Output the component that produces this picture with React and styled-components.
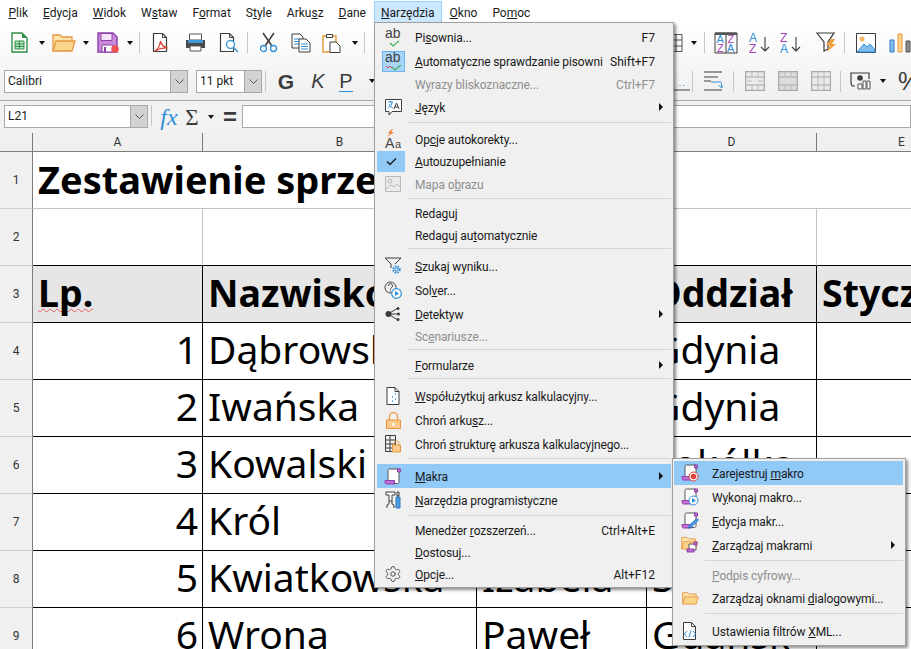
import React from 'react'
import styled, { createGlobalStyle } from 'styled-components'
import { Settings } from 'lucide-react'

const uiFont = `Roboto, "Noto Sans", sans-serif`
const sheetFont = `"Noto Sans", "Open Sans", sans-serif`

const Global = createGlobalStyle`
  html, body { margin: 0; padding: 0; background: #fff; }
  body { font-family: ${uiFont}; font-size: 12px; color: #1a1a1a; }
`

const Page = styled.div`
  width: 911px;
  height: 649px;
  position: relative;
  overflow: hidden;
  background: #fff;
`
const Chrome = styled.div`
  height: 100px;
  background: linear-gradient(#ffffff 24px, #efefef 100%);
  border-bottom: 1px solid #a9a9a9;
`
const MenuBar = styled.div`
  height: 24px;
  display: flex;
  padding-left: 1px;
`
const MenuTitle = styled.div`
  height: 21px;
  margin-top: 1px;
  padding: 0 6.5px;
  display: flex;
  align-items: center;
  border: 1px solid ${p => (p.$open ? '#99d1ff' : 'transparent')};
  background: ${p => (p.$open ? '#cce8ff' : 'transparent')};
`
const Toolbar = styled.div`
  display: flex;
  align-items: center;
  box-sizing: border-box;
  height: 38px;
  padding-left: ${p => p.$pad || 0}px;
  padding-bottom: ${p => p.$pb || 0}px;
`
const Tool = styled.div`
  flex: none;
  width: ${p => p.$w}px;
  height: 24px;
  display: flex;
  align-items: center;
  justify-content: center;
`
const Sep = styled.div`
  flex: none;
  width: 1px;
  height: 21px;
  background: #c6c6c6;
`
const Drop = styled.div`
  width: 0;
  height: 0;
  border-left: 3.5px solid transparent;
  border-right: 3.5px solid transparent;
  border-top: 4px solid #111;
`
const Combo = styled.div`
  flex: none;
  width: ${p => p.$w}px;
  height: 23px;
  display: flex;
  box-sizing: border-box;
  border: 1px solid #a8a8a8;
  background: #fff;
  margin-right: ${p => p.$mr || 0}px;
`
const ComboText = styled.div`
  flex: 1;
  padding-left: 3px;
  line-height: 21px;
  font-size: 12px;
  color: #222;
`
const ComboBtn = styled.div`
  width: 16px;
  background: #d2d2d2;
  border-left: 1px solid #a8a8a8;
  display: flex;
  align-items: center;
  justify-content: center;
`
const Glyph = styled.span`
  font-family: "Liberation Sans", sans-serif;
  font-size: ${p => p.$size || 18}px;
  font-weight: ${p => (p.$bold ? 700 : 400)};
  font-style: ${p => (p.$italic ? 'italic' : 'normal')};
  color: ${p => p.$color || '#3c3c3c'};
  border-bottom: ${p => (p.$under ? '1px solid #2f8fd8' : 'none')};
  line-height: 1;
`
const FxGlyph = styled(Glyph)`
  font-family: "Liberation Serif", serif;
`
const FormulaBar = styled.div`
  height: 32px;
  box-sizing: border-box;
  background: #f2f2f2;
  display: flex;
  align-items: flex-start;
  padding: 4px 0 0 4px;
`
const FormulaInput = styled.div`
  flex: 1;
  height: 23px;
  box-sizing: border-box;
  border: 1px solid #a8a8a8;
  background: #fff;
`
const Sheet = styled.div`
  display: grid;
  grid-template-columns: 33px 170px 274px 170px 170px 170px;
  grid-template-rows: 19px repeat(9, 57px);
`
const ColHead = styled.div`
  background: #f0f0f0;
  border-bottom: 1px solid #7d7d7d;
  border-right: 1px solid #7d7d7d;
  text-align: center;
  line-height: 18px;
  font-size: 12px;
  color: #333;
`
const RowHead = styled.div`
  background: #f0f0f0;
  border-right: 1px solid #7d7d7d;
  border-bottom: 1px solid #d0d0d0;
  display: flex;
  align-items: center;
  justify-content: center;
  font-size: 12px;
  color: #333;
`
const Cell = styled.div`
  box-sizing: border-box;
  overflow: hidden;
  white-space: nowrap;
  padding: 0 4px 4px 5px;
  display: flex;
  align-items: center;
  justify-content: ${p => (p.$right ? 'flex-end' : 'flex-start')};
  font-family: ${sheetFont};
  font-size: 39px;
  line-height: 52px;
  color: #000;
  background: #fff;
  border-right: 1px solid ${p => (p.$soft ? '#c4c4c4' : '#000')};
  border-bottom: 1px solid #000;
`
const TitleCell = styled(Cell)`
  grid-column: span 5;
  padding-bottom: 2px;
  font-size: 38px;
  font-weight: 700;
  border-right: 0;
  border-bottom: 1px solid #c4c4c4;
`
const HeadCell = styled(Cell)`
  padding-bottom: 2px;
  font-size: 37.5px;
  font-weight: 700;
  background: #e6e6e6;
`
const Misspelt = styled.span`
  text-decoration: underline wavy #ee5b5b 1px;
  text-decoration-skip-ink: none;
  text-underline-offset: 1px;
`
const Popup = styled.div`
  position: absolute;
  left: ${p => p.$x}px;
  top: ${p => p.$y}px;
  width: ${p => p.$w}px;
  box-sizing: border-box;
  padding: 2px 2px 2px ${p => p.$pl}px;
  background: #f0f0f0;
  border: 1px solid #a0a0a0;
  box-shadow: 2px 2px 3px rgba(0, 0, 0, 0.45);
`
const Row = styled.div`
  height: ${p => p.$h}px;
  display: flex;
  align-items: center;
  color: ${p => (p.$off ? '#8f8f8f' : '#1a1a1a')};
  background: ${p => (p.$hot ? '#91c9f7' : 'transparent')};
`
const IconCell = styled.div`
  flex: none;
  width: 28px;
  margin-right: 10px;
  height: 100%;
  display: flex;
  align-items: center;
  justify-content: center;
  box-sizing: border-box;
  padding-left: ${p => (p.$on ? 0 : 4)}px;
  background: ${p => (p.$on ? '#91c9f7' : 'transparent')};
`
const AutoBox = styled.div`
  flex: none;
  width: 23px;
  height: 21px;
  box-sizing: border-box;
  display: flex;
  align-items: center;
  justify-content: center;
  background: #a9d5f9;
  border: 1px solid #6cb4ef;
`
const Label = styled.div`
  flex: 1;
  white-space: nowrap;
  padding-top: 1px;
  letter-spacing: -0.12px;
`
const Key = styled.u`
  text-underline-offset: 1px;
`
const Shortcut = styled.div`
  margin-right: 16px;
  padding-top: 1px;
  white-space: nowrap;
`
const Arrow = styled.div`
  width: 0;
  height: 0;
  margin-right: 8px;
  border-top: 4px solid transparent;
  border-bottom: 4px solid transparent;
  border-left: 4px solid #111;
`
const Divider = styled.div`
  height: ${p => p.$h}px;
  margin-left: 31px;
  box-sizing: border-box;
  padding-top: ${p => p.$top || 3}px;
  &::before {
    content: '';
    display: block;
    height: 1px;
    background: #d4d4d4;
  }
`

// "~" marks the mnemonic letter, same as the labels in LibreOffice itself
const Mnemonic = ({ text }) => {
  const i = text.indexOf('~')
  if (i < 0) return text
  return (
    <>
      {text.slice(0, i)}
      <Key>{text[i + 1]}</Key>
      {text.slice(i + 2)}
    </>
  )
}

const Svg = ({ w, h, children, o }) => (
  <svg width={w} height={h} viewBox={`0 0 ${w} ${h}`} fill="none" style={o ? { opacity: o } : undefined}>
    {children}
  </svg>
)
const svgText = { fontFamily: '"Liberation Sans", sans-serif' }

const NewSheetIcon = () => (
  <Svg w={17} h={21}>
    <path d="M1 1h10l5 5v14H1z" fill="#fff" stroke="#2f8f46" strokeWidth="1.4" />
    <path d="M11 1v5h5z" fill="#2f8f46" />
    <path d="M4 9h9v8H4z" fill="#bfe3c6" stroke="#2f8f46" />
    <path d="M4 12h9M4 14.500h9M8.500 9v8" stroke="#2f8f46" />
  </Svg>
)
const FolderPaths = () => (
  <>
    <path d="M1 18V2h7l2 2h10v4" fill="#fde3ad" stroke="#e8973f" strokeWidth="1.3" />
    <path d="M1 18l3-10h19l-3 10z" fill="#fbd58a" stroke="#e8973f" strokeWidth="1.3" />
  </>
)
const FolderIcon = ({ w = 24, h = 19 }) => (
  <svg width={w} height={h} viewBox="0 0 24 19" fill="none">
    <FolderPaths />
  </svg>
)
const SaveIcon = () => (
  <Svg w={23} h={22}>
    <path d="M1 1h15l4 4v15H1z" fill="#c98ad8" stroke="#8d3fa8" strokeWidth="1.4" />
    <path d="M4 1.500h11v7H4z" fill="#f3e4f7" stroke="#8d3fa8" />
    <path d="M5 13h11v7H5z" fill="#fff" stroke="#8d3fa8" />
    <path d="M7 15h2v5H7z" fill="#8d3fa8" />
    <circle cx="18" cy="17" r="3.800" fill="#ee5253" />
  </Svg>
)
const DocOutline = () => <path d="M1.500 1.500h9l4 4v14h-13z" fill="#fff" stroke="#3c3c3c" strokeWidth="1.2" />
const PdfIcon = () => (
  <Svg w={17} h={21}>
    <DocOutline />
    <path d="M10.500 1.500v4h4" stroke="#3c3c3c" />
    <path d="M3 19c3-2 5-6 5.500-10 .8 4 3 6 7 7-4-.5-7 0-12.500 3z" stroke="#e2453c" strokeWidth="1.3" />
  </Svg>
)
const PrintIcon = () => (
  <Svg w={21} h={19}>
    <path d="M4.500 1h12v6h-12z" fill="#fff" stroke="#555" />
    <path d="M1 7h19v8H1z" fill="#4a4a4a" />
    <path d="M3 7h15v3H3z" fill="#3f9ad8" />
    <path d="M5 13h11v5H5z" fill="#fff" stroke="#555" />
  </Svg>
)
const PreviewIcon = () => (
  <Svg w={20} h={21}>
    <DocOutline />
    <path d="M10.500 1.500v4h4" stroke="#3c3c3c" />
    <circle cx="11.500" cy="12.500" r="4" fill="#fff" stroke="#3f9ad8" strokeWidth="1.4" />
    <path d="M14.500 15.500l4.500 4.500" stroke="#3f9ad8" strokeWidth="1.6" />
  </Svg>
)
const CutIcon = () => (
  <Svg w={19} h={21}>
    <path d="M4 1l9 13M15 1L6 14" stroke="#3c3c3c" strokeWidth="1.5" />
    <circle cx="4.500" cy="16.500" r="3" stroke="#2f8fd8" strokeWidth="1.3" />
    <circle cx="14.500" cy="16.500" r="3" stroke="#2f8fd8" strokeWidth="1.3" />
  </Svg>
)
const CopyIcon = () => (
  <Svg w={20} h={20}>
    <path d="M1 1h8l3 3v11H1z" fill="#fff" stroke="#3c3c3c" />
    <path d="M3 6h6M3 8.500h6M3 11h6" stroke="#2f8fd8" />
    <path d="M8 6h7l4 4v9H8z" fill="#fff" stroke="#3c3c3c" />
    <path d="M10 11h7M10 13.500h7M10 16h7" stroke="#2f8fd8" />
  </Svg>
)
const PasteIcon = () => (
  <Svg w={19} h={21}>
    <path d="M1 4h13v16H1z" fill="#fff" stroke="#e8973f" strokeWidth="1.4" />
    <path d="M4.500 2.500h6v3h-6z" fill="#fff" stroke="#3c3c3c" />
    <path d="M8 10h6l4 4v6.500H8z" fill="#fff" stroke="#3c3c3c" />
  </Svg>
)
const TableIcon = () => (
  <Svg w={20} h={20}>
    <path d="M1 1.500h18v17H1zM1 7h18M1 13h18M7 1.500v17M13 1.500v17" stroke="#555" />
  </Svg>
)
const Letter = ({ x, y, c, s = 11, children }) => (
  <text x={x} y={y} fill={c} fontSize={s} style={svgText}>
    {children}
  </text>
)
const blue = '#2f8fd8'
const purple = '#a63fb5'
const AzIcon = () => (
  <Svg w={24} h={22}>
    <path d="M1 1h22v20H1zM12 3v18" stroke="#3c3c3c" />
    <path d="M1 .5h22v2.500H1z" fill="#555" />
    <Letter x={2.500} y={11} c={blue}>A</Letter>
    <Letter x={3} y={20} c={purple}>Z</Letter>
    <Letter x={13.500} y={11} c={purple}>Z</Letter>
    <Letter x={13} y={20} c={blue}>A</Letter>
  </Svg>
)
const SortIcon = ({ top, bottom, topC, bottomC }) => (
  <Svg w={22} h={22}>
    <Letter x={0} y={10} c={topC} s={12}>{top}</Letter>
    <Letter x={0} y={21} c={bottomC} s={12}>{bottom}</Letter>
    <path d="M16 5v14M12 15l4 4 4-4" stroke="#3c3c3c" strokeWidth="1.1" />
  </Svg>
)
const FilterIcon = () => (
  <Svg w={21} h={21}>
    <path d="M1 1h17l-6 9v7l-4 2v-9z" fill="#fff" stroke="#3c3c3c" strokeWidth="1.2" />
    <path d="M15 7l-5 6h4l-3 7 9-8h-4l3-5z" fill="#f0a03c" />
  </Svg>
)
const ImageIcon = () => (
  <Svg w={20} h={20}>
    <path d="M.5 .5h19v19H.5z" fill="#fff" stroke="#3c3c3c" strokeWidth="1" />
    <circle cx="6" cy="6" r="2.500" fill="#f5b461" />
    <path d="M1 19l7-8 3 3 3-3 5 6v2z" fill="#82bdf0" stroke="#2f8fd8" />
  </Svg>
)
const ChartIcon = () => (
  <Svg w={23} h={20}>
    <path d="M1 7h4v12H1z" fill="#82bdf0" stroke="#2f78c0" />
    <path d="M9 1h4v18H9z" fill="#fbd58a" stroke="#e8973f" />
    <path d="M17 8h4v11h-4z" fill="#8a8a8a" stroke="#555" />
  </Svg>
)
const AlignIcon = () => (
  <Svg w={20} h={20}>
    <path d="M0 19h20" stroke="#3c3c3c" />
    <path d="M10 14v2M14 14v2" stroke="#2f8fd8" strokeDasharray="1 1" />
  </Svg>
)
const WrapIcon = () => (
  <Svg w={20} h={20}>
    <path d="M1 1h18M1 6h14M1 10h7M1 19h18" stroke="#3c3c3c" />
    <path d="M8 11h9c1 0 1.500 1 1.500 2v3M15.500 14l3 3 3-3" stroke="#2f8fd8" />
  </Svg>
)
const MergeIcon = ({ kind }) => (
  <Svg w={20} h={20}>
    <path d="M.5 .5h19v19H.5z" fill={kind === 1 ? '#dcdcdc' : '#eaeaea'} stroke="#a9a9a9" strokeWidth="1.4" />
    <path d="M1 6h18M1 14h18" stroke="#a9a9a9" />
    {kind === 0 && <path d="M7 .5v5M13 .5v5M7 14v5M13 14v5M2 10h5M13 10h5" stroke="#b8b8b8" />}
    {kind === 1 && <path d="M7 .5v5M13 .5v5M7 14v5M13 14v5" stroke="#b8b8b8" />}
    {kind === 2 && <path d="M7 .5v19M13 .5v19" stroke="#b8b8b8" />}
  </Svg>
)
const CurrencyIcon = () => (
  <Svg w={22} h={18}>
    <path d="M2 11V1h18v6M2 11l1 3h3" stroke="#3c3c3c" strokeWidth="1.2" />
    <circle cx="11" cy="6" r="2.800" fill="#3c3c3c" />
    <path d="M9 12h4v5H9zM14 9h3v8h-3zM18 9h3v8h-3z" fill="#fff" stroke="#555" />
  </Svg>
)
const ChevronIcon = () => (
  <Svg w={9} h={5}>
    <path d="M.5 .5l4 4 4-4" stroke="#555" />
  </Svg>
)

const AbIcon = ({ wave }) => (
  <Svg w={18} h={19}>
    <Letter x={1} y={10} c="#444" s={14}>ab</Letter>
    {wave && <path d="M2 14l2 2 2-2 2 2" stroke="#e2453c" />}
    <path d={wave ? 'M8 15l3 3 6-5' : 'M6 15l3 3 6-5'} stroke="#3fae5a" strokeWidth="1.1" />
  </Svg>
)
const LangIcon = () => (
  <Svg w={17} h={17}>
    <path d="M.5 .5h16v12H7l-3 3.500v-3.500H.5z" fill="#fff" stroke="#3c3c3c" />
    <path d="M3 3h5M5.500 2v1M7 3c0 3-2 5-4 6M4 5c1 2 3 4 4 4" stroke="#2f8fd8" />
    <path d="M9 10l2.500-6 2.500 6M10 8h3" stroke="#3c3c3c" />
  </Svg>
)
const AutoCorrectIcon = () => (
  <Svg w={17} h={20}>
    <path d="M7 0L3 4h2L2 8l7-5H6l2-3z" fill="#ee7b2f" />
    <Letter x={0} y={19} c="#444" s={14}>A</Letter>
    <Letter x={10} y={19} c="#444" s={11}>a</Letter>
  </Svg>
)
const CheckIcon = () => (
  <Svg w={11} h={9}>
    <path d="M1 4.500l3 3 6-6" stroke="#222" strokeWidth="1.5" />
  </Svg>
)
const PictureIcon = () => (
  <Svg w={16} h={16} o={0.45}>
    <path d="M.5 .5h15v15H.5z" fill="#e4e4e4" stroke="#777" />
    <circle cx="5" cy="5" r="2" stroke="#777" />
    <path d="M1 13l5-4 3 2 3-3 3 3" stroke="#777" />
  </Svg>
)
const GoalSeekIcon = () => (
  <Svg w={18} h={18}>
    <path d="M1 1h16M1 1l6 6v4M17 1l-6 6" stroke="#3c3c3c" />
    <circle cx="12.500" cy="12.500" r="3.200" fill="#f0f0f0" stroke="#2f8fd8" strokeWidth="2" strokeDasharray="1.600 1" />
    <circle cx="12.500" cy="12.500" r="1.400" stroke="#2f8fd8" />
  </Svg>
)
const SolverIcon = () => (
  <Svg w={18} h={18}>
    <circle cx="6.500" cy="6.500" r="5.500" stroke="#3c3c3c" />
    <path d="M4.500 5c0-3 4-3 4 0 0 1.500-2 1.500-2 3.500M6.500 9.500v1" stroke="#3c3c3c" />
    <circle cx="12.500" cy="12.500" r="4.800" fill="#fff" stroke="#2f8fd8" strokeWidth="1.2" />
    <path d="M11 10l4 2.500-4 2.500z" fill="#2f8fd8" />
  </Svg>
)
const TraceIcon = () => (
  <Svg w={16} h={16}>
    <path d="M3 8L13 2M3 8h10M3 8l10 6" stroke="#3c3c3c" />
    <circle cx="3.500" cy="8" r="3" fill="#3c3c3c" />
    <circle cx="13" cy="2.500" r="1.500" fill="#3c3c3c" />
    <circle cx="13.500" cy="8" r="1.500" fill="#3c3c3c" />
    <circle cx="13" cy="13.500" r="1.500" fill="#3c3c3c" />
  </Svg>
)
const SharedDocIcon = () => (
  <Svg w={14} h={18}>
    <path d="M1 .5h8l4 4v13H1z" fill="#fff" stroke="#3c3c3c" />
    <path d="M9 .5v4h4" stroke="#3c3c3c" />
    <path d="M9 7h1M6 10h1M9 12h1M6 14h1" stroke="#2f8fd8" strokeWidth="1.600" />
  </Svg>
)
const LockIcon = () => (
  <Svg w={15} h={17}>
    <path d="M3.500 8V4.500a4 4 0 0 1 8 0V8" stroke="#ee9f4a" strokeWidth="1.400" />
    <path d="M.5 8h14v8.500H.5z" fill="#fbc98a" stroke="#e8973f" />
    <path d="M6.500 11h2v3h-2z" fill="#fff" />
  </Svg>
)
const SheetLockIcon = () => (
  <Svg w={16} h={18}>
    <path d="M.5 .5h10v16H.5zM.5 5h10M.5 9h10M.5 13h10M5 .5v16" stroke="#3c3c3c" />
    <path d="M9 10V8.500a2.500 2.500 0 0 1 5 0V10" stroke="#ee9f4a" />
    <path d="M7.500 10h8v7h-8z" fill="#fbc98a" stroke="#e8973f" />
  </Svg>
)
const Scroll = () => (
  <>
    <path d="M4 13V2.500C4 1.500 4.500 1 5.500 1H15v12.500c0 1-.5 2-1.500 2H9" fill="#fff" stroke="#555" />
    <path d="M13.500 1h3v3h-3z" fill="#c46ed6" stroke="#8d3fa8" />
    <path d="M1 12.500h9.500v3.500H2.500C1.500 16 1 15 1 14.500z" fill="#c46ed6" stroke="#8d3fa8" />
  </>
)
const MacroIcon = () => (
  <Svg w={18} h={17}>
    <Scroll />
  </Svg>
)
const ToolsIcon = () => (
  <Svg w={17} h={18}>
    <path d="M1 1h9v3H7v6H4V4H1z" fill="#fff" stroke="#3c3c3c" />
    <path d="M4 10v3l-2 1v3M7 10v3l2 1v3" stroke="#3c3c3c" />
    <path d="M11 6h4v11h-4z" fill="#4a9ee0" stroke="#2f78c0" />
    <path d="M12 1h2v4h-2z" stroke="#3c3c3c" />
  </Svg>
)
const RecordIcon = () => (
  <Svg w={18} h={18}>
    <Scroll />
    <circle cx="12.500" cy="12.500" r="4.500" fill="#fff" stroke="#e2453c" />
    <circle cx="12.500" cy="12.500" r="2.800" fill="#e2453c" />
  </Svg>
)
const RunIcon = () => (
  <Svg w={18} h={18}>
    <Scroll />
    <circle cx="12.500" cy="12.500" r="4.500" fill="#fff" stroke="#2f8fd8" />
    <path d="M11 10l4 2.500-4 2.500z" fill="#2f8fd8" />
  </Svg>
)
const EditIcon = () => (
  <Svg w={18} h={18}>
    <Scroll />
    <path d="M16 6.500l1.500 1.500-7 7-3 1 1-3z" fill="#4a9ee0" stroke="#2f78c0" />
  </Svg>
)
const ManageIcon = () => (
  <Svg w={18} h={18}>
    <g transform="scale(.72)"><FolderPaths /></g>
    <path d="M8 8h7v6H8z" fill="#fff" stroke="#555" />
    <path d="M13 6h3v3h-3z" fill="#c46ed6" stroke="#8d3fa8" />
    <path d="M6 13h7v3H6z" fill="#c46ed6" stroke="#8d3fa8" />
  </Svg>
)
const XmlIcon = () => (
  <Svg w={16} h={18}>
    <path d="M1.500 .5h8l4 4v13h-12z" fill="#fff" stroke="#3c3c3c" />
    <path d="M9.500 .5v4h4" stroke="#3c3c3c" />
    <path d="M5 9l-2.500 3L5 15M11 9l2.500 3L11 15M9 8.500l-2 7" stroke="#2f8fd8" />
  </Svg>
)

const titles = ['~Plik', '~Edycja', '~Widok', 'W~staw', 'F~ormat', 'S~tyle', 'Arku~sz', '~Dane', '~Narzędzia', '~Okno', 'Po~moc']

const toolsMenu = [
  { label: 'Pi~sownia...', keys: 'F7', icon: <AbIcon /> },
  { label: '~Automatyczne sprawdzanie pisowni', keys: 'Shift+F7', box: <AbIcon wave /> },
  { label: 'W~yrazy bliskoznaczne...', keys: 'Ctrl+F7', off: true, h: 22 },
  { label: '~Język', icon: <LangIcon />, more: true },
  { sep: 8 },
  { label: 'Op~cje autokorekty...', icon: <AutoCorrectIcon /> },
  { label: '~Autouzupełnianie', icon: <CheckIcon />, on: true, h: 21 },
  { label: 'Mapa o~brazu', icon: <PictureIcon />, off: true },
  { sep: 6, top: 2 },
  { label: 'Reda~guj', h: 22 },
  { label: 'Redaguj au~tomatycznie', h: 22 },
  { sep: 8, top: 2 },
  { label: '~Szukaj wyniku...', icon: <GoalSeekIcon /> },
  { label: 'Sol~ver...', icon: <SolverIcon /> },
  { label: '~Detektyw', icon: <TraceIcon />, more: true },
  { label: 'Sc~enariusze...', off: true, h: 20 },
  { sep: 8 },
  { label: '~Formularze', more: true, h: 22 },
  { sep: 8, top: 2 },
  { label: '~Współużytkuj arkusz kalkulacyjny...', icon: <SharedDocIcon /> },
  { label: 'Chroń arku~sz...', icon: <LockIcon /> },
  { label: 'Chroń ~strukturę arkusza kalkulacyjnego...', icon: <SheetLockIcon /> },
  { sep: 8, top: 2 },
  { label: '~Makra', icon: <MacroIcon />, more: true, hot: true },
  { label: '~Narzędzia programistyczne', icon: <ToolsIcon /> },
  { sep: 7 },
  { label: 'Menedżer ~rozszerzeń...', keys: 'Ctrl+Alt+E', h: 22 },
  { label: '~Dostosuj...', h: 22 },
  { label: '~Opcje...', keys: 'Alt+F12', icon: <Settings size={18} strokeWidth={1.2} color="#444" />, h: 22 },
]

const macroMenu = [
  { label: 'Zarejestruj ~makro', icon: <RecordIcon />, hot: true },
  { label: 'W~ykonaj makro...', icon: <RunIcon /> },
  { label: '~Edycja makr...', icon: <EditIcon /> },
  { label: '~Zarządzaj makrami', icon: <ManageIcon />, more: true },
  { sep: 8 },
  { label: '~Podpis cyfrowy...', off: true, h: 21 },
  { label: 'Zarządzaj oknami ~dialogowymi...', icon: <FolderIcon w={17} h={14} /> },
  { sep: 9 },
  { label: 'Ustawienia filtrów ~XML...', icon: <XmlIcon /> },
]

const rows = [
  ['1', 'Dąbrowska', '', 'Gdynia'],
  ['2', 'Iwańska', '', 'Gdynia'],
  ['3', 'Kowalski', '', 'Sokółka'],
  ['4', 'Król', '', ''],
  ['5', 'Kwiatkowska', 'Izabela', 'Sopot'],
  ['6', 'Wrona', 'Paweł', 'Gdańsk'],
]

const Menu = ({ items, x, y, w, pl }) => (
  <Popup $x={x} $y={y} $w={w} $pl={pl}>
    {items.map((it, i) =>
      it.sep ? (
        <Divider key={i} $h={it.sep} $top={it.top} />
      ) : (
        <Row key={i} $h={it.h || 24} $off={it.off} $hot={it.hot}>
          <IconCell $on={it.on}>{it.box ? <AutoBox>{it.box}</AutoBox> : it.icon}</IconCell>
          <Label><Mnemonic text={it.label} /></Label>
          {it.keys && <Shortcut>{it.keys}</Shortcut>}
          {it.more && <Arrow />}
        </Row>
      )
    )}
  </Popup>
)

const DropTool = ({ w }) => (
  <Tool $w={w}><Drop /></Tool>
)

export default function App() {
  return (
    <Page>
      <Global />
      <Chrome>
        <MenuBar>
          {titles.map(t => (
            <MenuTitle key={t} $open={t === '~Narzędzia'}><span><Mnemonic text={t} /></span></MenuTitle>
          ))}
        </MenuBar>
        <Toolbar $pad={5} $pb={1}>
          <Tool $w={28}><NewSheetIcon /></Tool>
          <DropTool w={18} />
          <Tool $w={25}><FolderIcon /></Tool>
          <DropTool w={20} />
          <Tool $w={24}><SaveIcon /></Tool>
          <DropTool w={19} />
          <Sep />
          <Tool $w={40}><PdfIcon /></Tool>
          <Tool $w={30}><PrintIcon /></Tool>
          <Tool $w={37}><PreviewIcon /></Tool>
          <Sep />
          <Tool $w={40}><CutIcon /></Tool>
          <Tool $w={26}><CopyIcon /></Tool>
          <Tool $w={35}><PasteIcon /></Tool>
          <DropTool w={12} />
          <Tool $w={3} />
          <Sep />
          <Tool $w={298} />
          <Tool $w={20}><TableIcon /></Tool>
          <DropTool w={21} />
          <Sep />
          <Tool $w={41}><AzIcon /></Tool>
          <Tool $w={27}><SortIcon top="A" bottom="Z" topC={blue} bottomC={purple} /></Tool>
          <Tool $w={35}><SortIcon top="Z" bottom="A" topC={purple} bottomC={blue} /></Tool>
          <Tool $w={36}><FilterIcon /></Tool>
          <Sep />
          <Tool $w={42}><ImageIcon /></Tool>
          <Tool $w={26}><ChartIcon /></Tool>
        </Toolbar>
        <Toolbar $pad={4}>
          <Combo $w={184} $mr={8}>
            <ComboText>Calibri</ComboText>
            <ComboBtn><ChevronIcon /></ComboBtn>
          </Combo>
          <Combo $w={66} $mr={3}>
            <ComboText>11 pkt</ComboText>
            <ComboBtn><ChevronIcon /></ComboBtn>
          </Combo>
          <Sep />
          <Tool $w={40}><Glyph $bold $size={21}>G</Glyph></Tool>
          <Tool $w={24}><Glyph $italic $size={20}>K</Glyph></Tool>
          <Tool $w={32}><Glyph $under $size={20}>P</Glyph></Tool>
          <Tool $w={20}><Drop /></Tool>
          <Tool $w={288} />
          <Tool $w={20}><AlignIcon /></Tool>
          <Tool $w={2} />
          <Sep />
          <Tool $w={40}><WrapIcon /></Tool>
          <Sep />
          <Tool $w={11} />
          <Tool $w={20}><MergeIcon kind={0} /></Tool>
          <Tool $w={13} />
          <Tool $w={20}><MergeIcon kind={1} /></Tool>
          <Tool $w={13} />
          <Tool $w={20}><MergeIcon kind={2} /></Tool>
          <Tool $w={9} />
          <Sep />
          <Tool $w={38}><CurrencyIcon /></Tool>
          <Tool $w={8}><Drop /></Tool>
          <Tool $w={44}><Glyph $size={25}>%</Glyph></Tool>
        </Toolbar>
      </Chrome>
      <FormulaBar>
        <Combo $w={144}>
          <ComboText>L21</ComboText>
          <ComboBtn><ChevronIcon /></ComboBtn>
        </Combo>
        <Tool $w={3} />
        <Sep />
        <Tool $w={34}><FxGlyph $italic $color="#2f8fd8" $size={24}>fx</FxGlyph></Tool>
        <Tool $w={12}><FxGlyph $size={23}>Σ</FxGlyph></Tool>
        <Tool $w={26}><Drop /></Tool>
        <Tool $w={12}><Glyph $bold $size={24}>=</Glyph></Tool>
        <Tool $w={6} />
        <FormulaInput />
      </FormulaBar>
      <Sheet>
        <ColHead />
        {['A', 'B', 'C', 'D', 'E'].map(c => <ColHead key={c}>{c}</ColHead>)}

        <RowHead>1</RowHead>
        <TitleCell>Zestawienie sprzedaży</TitleCell>

        <RowHead>2</RowHead>
        {[0, 1, 2, 3, 4].map(i => <Cell key={i} $soft />)}

        <RowHead>3</RowHead>
        <HeadCell><Misspelt>Lp.</Misspelt></HeadCell>
        <HeadCell>Nazwisko</HeadCell>
        <HeadCell />
        <HeadCell>Oddział</HeadCell>
        <HeadCell>Styczeń</HeadCell>

        {rows.map((r, i) => (
          <React.Fragment key={r[0]}>
            <RowHead>{i + 4}</RowHead>
            <Cell $right>{r[0]}</Cell>
            <Cell>{r[1]}</Cell>
            <Cell>{r[2]}</Cell>
            <Cell>{r[3]}</Cell>
            <Cell />
          </React.Fragment>
        ))}
      </Sheet>
      <Menu items={toolsMenu} x={374} y={22} w={300} pl={2} />
      <Menu items={macroMenu} x={672} y={458} w={234} pl={1} />
    </Page>
  )
}
